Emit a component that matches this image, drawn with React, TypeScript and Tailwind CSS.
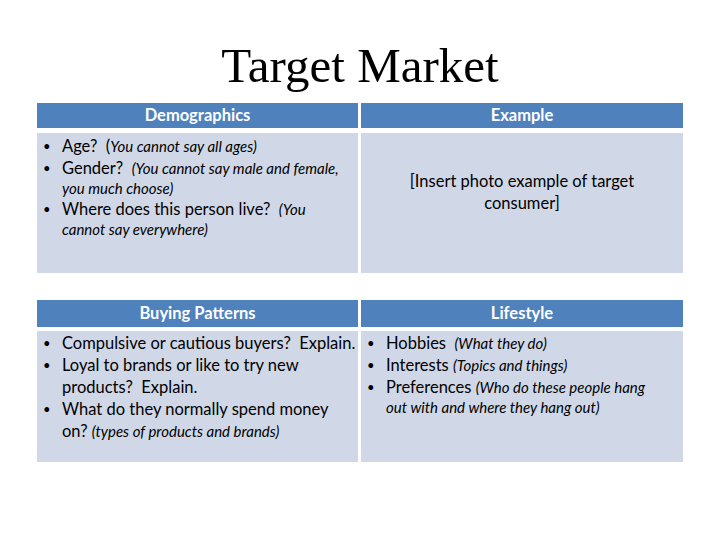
import React from "react";

const sans = "font-['Lato','Liberation_Sans',sans-serif]";

// a line is a list of pieces: [text, italic?]; an item is a list of lines
type Piece = [string, boolean?];
type Line = Piece[];

function Bullets({ items }: { items: Line[][] }) {
  return (
    <ul className="text-black whitespace-pre">
      {items.map((lines, i) => (
        <li key={i} className="flex">
          <span className="w-[25px] shrink-0 pl-[6px] text-[13px] leading-[22px]">•</span>
          <div>
            {lines.map((line, k) => {
              const hasMain = line.some(([, it]) => !it);
              return (
                <div
                  key={k}
                  className={hasMain ? "text-[16.5px] leading-[22px]" : "text-[15px] leading-[19px]"}
                >
                  {line.map(([t, it], j) =>
                    it ? (
                      <span key={j} className="italic text-[15px]">{t}</span>
                    ) : (
                      <span key={j}>{t}</span>
                    )
                  )}
                </div>
              );
            })}
          </div>
        </li>
      ))}
    </ul>
  );
}

function Head({ children }: { children: React.ReactNode }) {
  return (
    <div className="bg-[#4f81bd] text-white font-bold text-[16.5px] flex items-center justify-center">
      {children}
    </div>
  );
}

export default function App() {
  return (
    <div className={`w-[720px] h-[540px] bg-white ${sans}`}>
      <h1 className="pt-[39px] h-[103px] text-center text-[49px] leading-[54px] font-['Liberation_Serif',serif] text-black">
        Target Market
      </h1>

      <div className="mx-auto w-[646px] grid grid-cols-[321px_322px] grid-rows-[25px_140px] gap-x-[3px] gap-y-[5px]">
        <Head>Demographics</Head>
        <Head>Example</Head>
        <div className="bg-[#d0d8e8] pt-[2px]">
          <Bullets
            items={[
              [[["Age?  ("], ["You cannot say all ages)", true]]],
              [[["Gender?  "], ["(You cannot say male and female,", true]], [["you much choose)", true]]],
              [[["Where does this person live?  "], ["(You", true]], [["cannot say everywhere)", true]]],
            ]}
          />
        </div>
        <div className="bg-[#d0d8e8] pt-[37px] px-[30px] text-center text-[16.5px] leading-[22px] text-black">
          [Insert photo example of target consumer]
        </div>
      </div>

      <div className="mx-auto mt-[27px] w-[646px] grid grid-cols-[321px_322px] grid-rows-[27px_131px] gap-x-[3px] gap-y-[4px]">
        <Head>Buying Patterns</Head>
        <Head>Lifestyle</Head>
        <div className="bg-[#d0d8e8] pt-[1px]">
          <Bullets
            items={[
              [[["Compulsive or cautious buyers?  Explain."]]],
              [[["Loyal to brands or like to try new"]], [["products?  Explain."]]],
              [[["What do they normally spend money"]], [["on? "], ["(types of products and brands)", true]]],
            ]}
          />
        </div>
        <div className="bg-[#d0d8e8] pt-[1px]">
          <Bullets
            items={[
              [[["Hobbies  "], ["(What they do)", true]]],
              [[["Interests "], ["(Topics and things)", true]]],
              [[["Preferences "], ["(Who do these people hang", true]], [["out with and where they hang out)", true]]],
            ]}
          />
        </div>
      </div>
    </div>
  );
}
